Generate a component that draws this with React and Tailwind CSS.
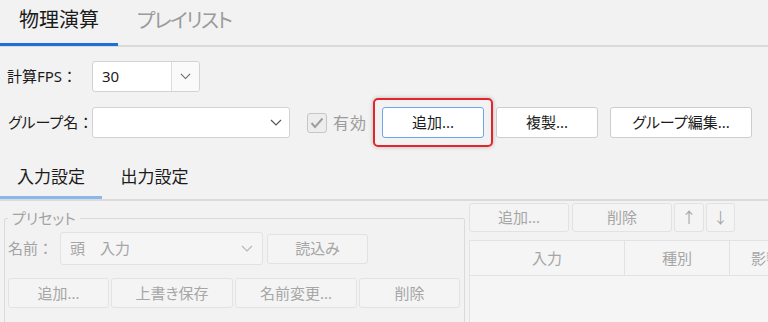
import React from 'react';

const Chevron = ({ w = 12, color = '#555' }) => (
  <svg width={w} height={w / 2 + 1} viewBox="0 0 12 7" fill="none">
    <polyline points="1,1 6,6 11,1" stroke={color} strokeWidth="1.2" />
  </svg>
);

// full-width colon without proportional spacing
const Colon = () => <span className="[font-feature-settings:normal]">：</span>;

const Btn = ({ children, className = '', disabled }) => (
  <div
    className={`flex items-center justify-center shrink-0 whitespace-nowrap rounded-[3px] border text-[15px] leading-none ${
      disabled ? 'border-[#e2e2e2] bg-[#f4f4f4] text-[#a6a6a6]' : 'border-[#cdcdcd] bg-white text-[#1c1c1c]'
    } ${className}`}
  >
    {children}
  </div>
);

export default function App() {
  return (
    <div className="w-[768px] h-[322px] overflow-hidden bg-[#f2f2f2] text-[#1c1c1c] font-['Noto_Sans','Noto_Sans_CJK_JP',sans-serif] [font-feature-settings:'palt']">
      {/* top tabs */}
      <div className="flex h-[47px] border-b-2 border-[#dadada]">
        <div className="w-[118px] h-[46px] self-start flex items-center justify-center pb-[3px] border-b-[3px] border-[#1f6fd8] text-[20px] leading-none text-[#1a1a1a]">
          物理演算
        </div>
        <div className="ml-[19px] flex items-center pb-[3px] text-[20px] leading-none tracking-[-1.5px] text-[#9b9b9b]">プレイリスト</div>
      </div>

      {/* FPS row */}
      <div className="flex items-center mt-[14px] pl-[7px] h-[31px]">
        <div className="w-[85px] shrink-0 whitespace-nowrap text-[15px] leading-none">計算FPS<Colon /></div>
        <div className="flex w-[108px] h-[31px] rounded-[3px] border border-[#d2d2d2] bg-white">
          <div className="flex-1 flex items-center pl-[9px] text-[15px] leading-none">30</div>
          <div className="w-[28px] flex items-center justify-center border-l border-[#dcdcdc] bg-[#fafafa] rounded-r-[3px]">
            <Chevron w={11} color="#666" />
          </div>
        </div>
      </div>

      {/* group row */}
      <div className="flex items-center mt-[15px] pl-[8px] h-[31px]">
        <div className="w-[84px] shrink-0 whitespace-nowrap text-[15px] leading-none">グループ名<Colon /></div>
        <div className="flex shrink-0 items-center justify-end w-[198px] h-[31px] rounded-[3px] border border-[#d2d2d2] bg-white pr-[7px]">
          <Chevron w={12} color="#555" />
        </div>
        <div className="ml-[17px] shrink-0 w-[20px] h-[20px] rounded-[3px] border border-[#c6c6c6] bg-[#ededed] flex items-center justify-center">
          <svg width="14" height="12" viewBox="0 0 14 12" fill="none">
            <polyline points="1.5,6 5,10 12.5,1.5" stroke="#9e9e9e" strokeWidth="2" />
          </svg>
        </div>
        <div className="ml-[6px] shrink-0 whitespace-nowrap text-[16px] leading-none tracking-[1px] text-[#9b9b9b] [font-feature-settings:normal]">有効</div>
        <div className="ml-[6px] shrink-0 my-[-9px] p-[7px] rounded-[5px] border-2 border-[#e3242b] shadow-[0_0_4px_rgba(0,0,0,0.25)]">
          <Btn className="w-[102px] h-[31px] !border-[#6fa3ea]">追加...</Btn>
        </div>
        <Btn className="ml-[3px] w-[102px] h-[31px]">複製...</Btn>
        <Btn className="ml-[12px] w-[142px] h-[31px]">グループ編集...</Btn>
      </div>

      {/* second tabs */}
      <div className="flex h-[50px] mt-[13px] border-b-2 border-[#dadada]">
        <div className="w-[102px] h-[48px] flex items-center justify-center pt-[5px] border-b-[3px] border-[#8cb6ee] text-[17px] leading-none">
          入力設定
        </div>
        <div className="w-[105px] flex items-center justify-center pt-[2px] text-[17px] leading-none">出力設定</div>
      </div>

      <div className="flex">
        {/* left pane */}
        <div className="w-[466px] pl-[4px] pr-[1px] shrink-0">
          <fieldset className="mt-[7px] h-[200px] border border-[#dadada] rounded-[2px] px-[3px]">
            <legend className="px-[4px] text-[15px] leading-[20px] text-[#a3a3a3]">プリセット</legend>
            <div className="flex items-center mt-[4px]">
              <div className="w-[52px] shrink-0 whitespace-nowrap text-[15px] leading-none text-[#a3a3a3]">名前<Colon /></div>
              <div className="flex items-center w-[203px] h-[33px] rounded-[3px] border border-[#e2e2e2] bg-[#f5f5f5] pl-[9px] pr-[9px] text-[15px] leading-none text-[#a6a6a6]">
                <span className="flex-1">頭　入力</span>
                <Chevron w={12} color="#b8b8b8" />
              </div>
              <Btn disabled className="ml-[4px] w-[101px] h-[30px]">読込み</Btn>
            </div>
            <div className="flex gap-[2px] mt-[13px]">
              <Btn disabled className="w-[101px] h-[30px]">追加...</Btn>
              <Btn disabled className="w-[122px] h-[30px]">上書き保存</Btn>
              <Btn disabled className="w-[122px] h-[30px]">名前変更...</Btn>
              <Btn disabled className="w-[101px] h-[30px]">削除</Btn>
            </div>
          </fieldset>
        </div>

        {/* right pane */}
        <div className="flex-1 pl-[3px] pt-[2px]">
          <div className="flex gap-[2px]">
            <Btn disabled className="w-[100px] h-[29px]">追加...</Btn>
            <Btn disabled className="ml-[1px] w-[100px] h-[29px]">削除</Btn>
            <Btn disabled className="w-[30px] h-[29px]">↑</Btn>
            <Btn disabled className="w-[29px] h-[29px]">↓</Btn>
          </div>
          <div className="mt-[8px] w-[340px] h-[120px] border border-[#e2e2e2] bg-[#f5f5f5]">
            <div className="flex h-[35px] border-b border-[#e2e2e2] text-[15px] leading-none text-[#a6a6a6]">
              <div className="w-[155px] flex items-center justify-center border-r border-[#e2e2e2]">入力</div>
              <div className="w-[105px] flex items-center justify-center border-r border-[#e2e2e2]">種別</div>
              <div className="w-[72px] flex items-center justify-center">影響</div>
            </div>
          </div>
        </div>
      </div>
    </div>
  );
}
